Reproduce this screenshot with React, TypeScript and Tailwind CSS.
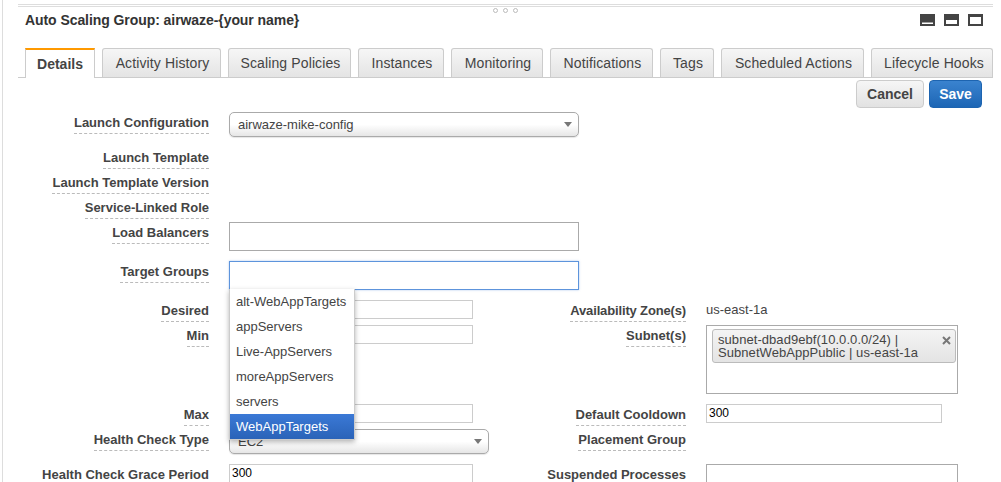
import type { ReactNode } from "react";

const tabs = [
  { name: "Activity History", width: "w-[119px] pl-[2px]" },
  { name: "Scaling Policies", width: "w-[123px] pl-[2px]" },
  { name: "Instances", width: "w-[86px] pl-[2px]" },
  { name: "Monitoring", width: "w-[92px] pl-[2px]" },
  { name: "Notifications", width: "w-[103px] pl-[2px]" },
  { name: "Tags", width: "w-[54px] pl-[2px]" },
  { name: "Scheduled Actions", width: "w-[143px] pl-[2px]" },
  { name: "Lifecycle Hooks", width: "w-[122px] pl-[4px]" },
];

const targets = ["alt-WebAppTargets", "appServers", "Live-AppServers", "moreAppServers", "servers"];

function Label({ children }: { children: ReactNode }) {
  return (
    <span className="mt-[4px] block h-[18px] border-b border-dashed border-[#bbb] text-[13px] leading-[14px] font-bold whitespace-nowrap text-[#444]">
      {children}
    </span>
  );
}

function Row({ label, height, children }: { label: string; height: string; children?: ReactNode }) {
  return (
    <div className={`flex gap-[20px] ${height}`}>
      <div className="flex w-[191px] shrink-0 justify-end">
        <Label>{label}</Label>
      </div>
      {children}
    </div>
  );
}

function Cell({ label, children }: { label: ReactNode; children?: ReactNode }) {
  return (
    <div className="flex gap-[20px]">
      <div className="flex w-[196px] shrink-0 justify-end">
        <Label>{label}</Label>
      </div>
      {children}
    </div>
  );
}

function LeftCell({ label, children }: { label: string; children?: ReactNode }) {
  return (
    <div className="flex gap-[20px]">
      <div className="flex w-[191px] shrink-0 justify-end">
        <Label>{label}</Label>
      </div>
      {children}
    </div>
  );
}

function Caret() {
  return (
    <svg width="8" height="5" viewBox="0 0 8 5" className="shrink-0">
      <path d="M0 0h8L4 5z" fill="#777" />
    </svg>
  );
}

function Select({ value, width }: { value: string; width: string }) {
  return (
    <div
      className={`flex h-[25px] ${width} items-center justify-between rounded-[5px] border border-[#aaa] bg-gradient-to-b from-white from-50% to-[#e6e6e6] pr-[6px] pl-[8px] text-[13px] text-[#444] shadow-[0_1px_1px_rgba(0,0,0,0.1)]`}
    >
      <span>{value}</span>
      <Caret />
    </div>
  );
}

function NumberInput({ value, width }: { value?: string; width: string }) {
  return (
    <div className={`h-[19px] ${width} border border-[#ccc] bg-white pl-[2px] text-[12px] leading-[17px] text-black`}>
      {value}
    </div>
  );
}

export default function App() {
  return (
    <div className="h-[482px] w-[1001px] overflow-hidden bg-white font-['Liberation_Sans',Arial,sans-serif]">
      <div className="ml-[2px] h-full border-l-[1px] border-[#ddd] pt-[4px] pl-[15px]">
        <div className="h-[3px] w-[975px] border-y border-[#ddd]" />

        <div className="relative flex h-[41px] w-[975px] items-start pt-[3px] pl-[7px]">
          <h1 className="text-[14px] leading-[20px] font-bold tracking-[-0.07px] text-[#333]">Auto Scaling Group: airwaze-{"{your name}"}</h1>
          {/* resize grip */}
          <div className="absolute top-[1px] left-[475px] flex gap-[5px]">
            <span className="size-[5px] rounded-full border border-[#bbb]" />
            <span className="size-[5px] rounded-full border border-[#bbb]" />
            <span className="size-[5px] rounded-full border border-[#bbb]" />
          </div>
          {/* panel size buttons */}
          <div className="absolute top-[7px] right-[10px] flex gap-[9px]">
            <svg width="15" height="12" viewBox="0 0 15 12">
              <path d="M0 0h15v12H0z" fill="#444" />
              <path d="M2 8.500h11v1.500H2z" fill="#fff" />
            </svg>
            <svg width="15" height="12" viewBox="0 0 15 12">
              <path d="M0 0h15v12H0z" fill="#444" />
              <path d="M2 6h11v4H2z" fill="#fff" />
            </svg>
            <svg width="15" height="12" viewBox="0 0 15 12">
              <path d="M0 0h15v12H0z" fill="#444" />
              <path d="M2 3h11v7H2z" fill="#fff" />
            </svg>
          </div>
        </div>

        {/* tabs */}
        <div className="flex h-[30px] w-[975px] items-end gap-[7px] border-b border-[#ccc] pl-[7px]">
          <div className="-mb-px flex h-[30px] w-[71px] items-center justify-center border-x border-t-2 border-x-[#ccc] border-t-[#f90] bg-white text-[14px] font-bold text-[#444]">
            Details
          </div>
          {tabs.map((tab) => (
            <div
              key={tab.name}
              className={`flex h-[29px] ${tab.width} shrink-0 items-center justify-center rounded-t-[3px] border border-b-0 border-[#ccc] bg-gradient-to-b from-[#f6f6f6] to-[#e4e4e4] text-[14px] tracking-[0.12px] whitespace-nowrap text-[#444]`}
            >
              {tab.name}
            </div>
          ))}
        </div>

        {/* actions */}
        <div className="mt-[2px] mb-[4px] flex h-[28px] w-[964px] justify-end gap-[5px]">
          <button className="h-[28px] w-[68px] rounded-[4px] border border-[#ccc] bg-gradient-to-b from-[#f6f6f6] to-[#e2e2e2] text-[14px] font-bold text-[#444]">
            Cancel
          </button>
          <button className="h-[28px] w-[53px] rounded-[4px] border border-[#1d64b0] bg-gradient-to-b from-[#3a83cf] to-[#1c66b5] text-[14px] font-bold text-white">
            Save
          </button>
        </div>

        {/* form */}
        <Row label="Launch Configuration" height="h-[35px]">
          <Select value="airwaze-mike-config" width="w-[350px]" />
        </Row>
        <Row label="Launch Template" height="h-[25px]" />
        <Row label="Launch Template Version" height="h-[25px]" />
        <Row label="Service-Linked Role" height="h-[25px]" />
        <Row label="Load Balancers" height="h-[39px]">
          <div className="h-[29px] w-[350px] border border-[#aaa] bg-white" />
        </Row>
        <Row label="Target Groups" height="h-[39px]">
          <div className="relative z-10 h-[29px] w-[350px] border border-[#5d94dc] bg-white shadow-[0_0_2px_rgba(93,148,220,0.5)]">
            <ul className="absolute top-full -left-px w-[126px] border border-t-0 border-[#ccc] bg-white text-[13px] text-[#444] shadow-[0_2px_5px_rgba(0,0,0,0.3)]">
              {targets.map((target) => (
                <li key={target} className="flex h-[25px] items-center pl-[6px]">
                  {target}
                </li>
              ))}
              <li className="flex h-[25px] items-center bg-gradient-to-b from-[#3b79d6] to-[#2a63b8] pl-[6px] font-medium text-white">
                WebAppTargets
              </li>
            </ul>
          </div>
        </Row>

        <div className="grid grid-cols-[472px_1fr]">
          <div className="h-[25px]">
            <LeftCell label="Desired">
              <NumberInput width="w-[244px]" />
            </LeftCell>
          </div>
          <Cell label={<span className="tracking-[-0.15px]">Availability Zone(s)</span>}>
            <span className="text-[13px] leading-[20px] text-[#444]">us-east-1a</span>
          </Cell>

          <div className="h-[79px]">
            <LeftCell label="Min">
              <NumberInput width="w-[244px]" />
            </LeftCell>
          </div>
          <Cell label="Subnet(s)">
            <div className="h-[69px] w-[252px] border border-[#aaa] pt-[3px] pl-[5px]">
              <div className="relative h-[34px] w-[244px] rounded-[3px] border border-[#bbb] bg-gradient-to-b from-[#f4f4f4] to-[#e4e4e4] pt-[3px] pl-[5px] text-[13px] leading-[13px] tracking-[0.06px] text-[#444]">
                subnet-dbad9ebf(10.0.0.0/24) |<br />
                SubnetWebAppPublic | us-east-1a
                <svg width="9" height="9" viewBox="0 0 9 9" className="absolute top-[6px] right-[4px]">
                  <path d="M1 1l7 7M8 1L1 8" stroke="#777" strokeWidth="2" />
                </svg>
              </div>
            </div>
          </Cell>

          <div className="h-[25px]">
            <LeftCell label="Max">
              <NumberInput width="w-[244px]" />
            </LeftCell>
          </div>
          <Cell label="Default Cooldown">
            <NumberInput value="300" width="w-[236px]" />
          </Cell>

          <div className="h-[35px]">
            <LeftCell label="Health Check Type">
              <Select value="EC2" width="w-[260px]" />
            </LeftCell>
          </div>
          <Cell label="Placement Group" />

          <div>
            <LeftCell label="Health Check Grace Period">
              <NumberInput value="300" width="w-[244px]" />
            </LeftCell>
          </div>
          <Cell label="Suspended Processes">
            <div className="h-[40px] w-[252px] border border-[#aaa]" />
          </Cell>
        </div>
      </div>
    </div>
  );
}
